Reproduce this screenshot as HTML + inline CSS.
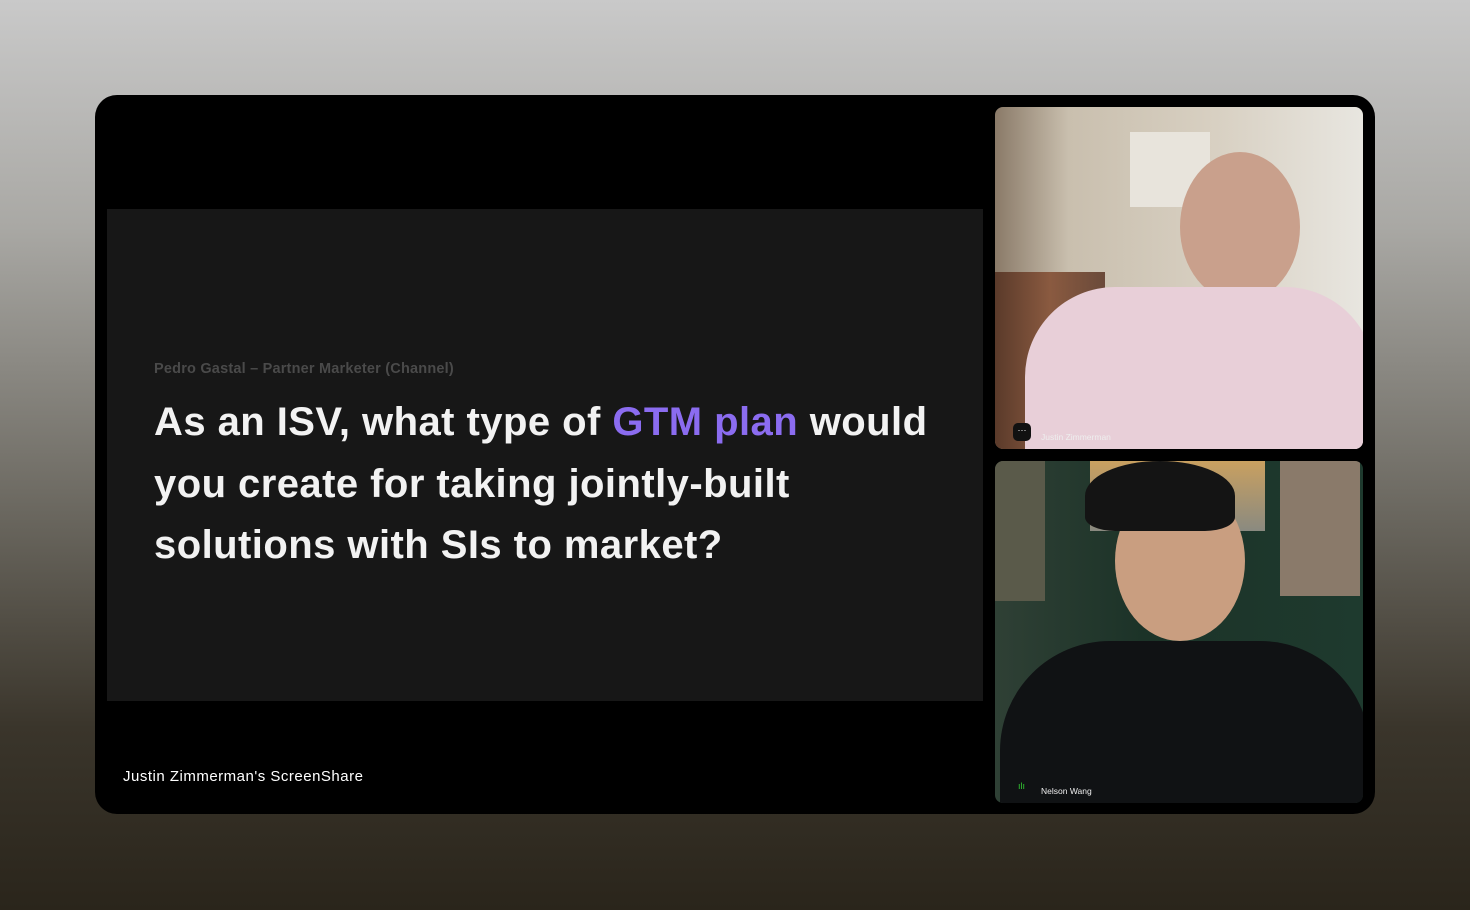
<!DOCTYPE html>
<html><head><style>
body{margin:0;width:1470px;height:910px;overflow:hidden;background:linear-gradient(180deg,#c9c9c9 0%,#a9a8a4 25%,#6d6a62 55%,#3a352b 80%,#2a251b 100%);font-family:"Liberation Sans",sans-serif;position:relative}
.card{position:absolute;left:95px;top:95px;width:1280px;height:719px;background:#000;border-radius:22px;overflow:hidden}
.slide{position:absolute;left:12px;top:114px;width:876px;height:492px;background:#171717}
.sub{position:absolute;left:47px;top:152px;color:#4a4a4a;font-size:14.5px;font-weight:bold;letter-spacing:0.2px}
.q{position:absolute;left:47px;top:183px;color:#f2f2f2;font-size:40px;font-weight:bold;line-height:61.5px;letter-spacing:0.45px}
.q span{color:#8b6cf0}
.cap{position:absolute;left:28px;top:673px;color:#fff;font-size:15px;letter-spacing:0.5px}
.v{position:absolute;left:900px;width:368px;height:342px;border-radius:8px;overflow:hidden}
.nm{position:absolute;color:#eee;font-size:8.5px}
</style></head><body>
<div class="card">
<div class="slide">
<div class="sub">Pedro Gastal – Partner Marketer (Channel)</div>
<div class="q">As an ISV, what type of <span>GTM plan</span> would<br>you create for taking jointly-built<br>solutions with SIs to market?</div>
</div>
<div class="cap">Justin Zimmerman's ScreenShare</div>
<div class="v" style="top:12px;background:linear-gradient(90deg,#8a7a68 0%,#c9bfae 20%,#d8d0c2 60%,#e8e6e0 100%)">
 <div style="position:absolute;left:135px;top:25px;width:80px;height:75px;background:#e8e4dc"></div>
 <div style="position:absolute;left:0;top:165px;width:110px;height:177px;background:linear-gradient(90deg,#5a3a2a,#8a5a40,#6a4a3a)"></div>
 <div style="position:absolute;left:185px;top:45px;width:120px;height:150px;border-radius:50%;background:#c9a08c"></div>
 <div style="position:absolute;left:30px;top:180px;width:350px;height:200px;border-radius:90px 90px 0 0;background:#e8cfd8"></div>
 <div style="position:absolute;left:18px;top:316px;width:18px;height:18px;border-radius:5px;background:#111;color:#fff;font-size:9px;text-align:center;line-height:14px">···</div>
 <div class="nm" style="left:46px;top:325px">Justin Zimmerman</div>
</div>
<div class="v" style="top:366px;background:linear-gradient(90deg,#2f4035 0%,#1c3328 40%,#1e3a2e 100%)">
 <div style="position:absolute;left:95px;top:0;width:175px;height:70px;background:linear-gradient(180deg,#c9a060,#8a8a80)"></div>
 <div style="position:absolute;left:285px;top:0;width:80px;height:135px;background:#8a7a6a"></div>
 <div style="position:absolute;left:0;top:0;width:50px;height:140px;background:#5a5a4a"></div>
 <div style="position:absolute;left:120px;top:20px;width:130px;height:160px;border-radius:50%;background:#c99e80"></div>
 <div style="position:absolute;left:90px;top:0;width:150px;height:70px;border-radius:50% 50% 20% 20%;background:#141414"></div>
 <div style="position:absolute;left:5px;top:180px;width:370px;height:200px;border-radius:110px 110px 0 0;background:#101214"></div>
 <div style="position:absolute;left:23px;top:320px;color:#3c3;font-size:9px">ılı</div>
 <div class="nm" style="left:46px;top:325px">Nelson Wang</div>
</div>
</div>
</body></html>
